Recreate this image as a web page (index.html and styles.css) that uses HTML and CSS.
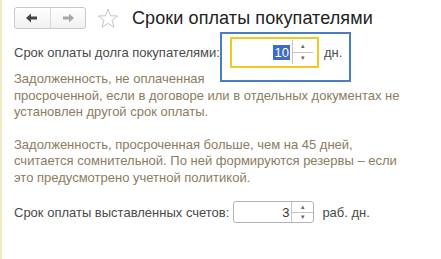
FILE: index.html
```html
<!DOCTYPE html>
<html lang="ru">
<head>
    <meta charset="UTF-8">
    <title>Сроки оплаты покупателями</title>
    <link rel="stylesheet" href="styles.css">
</head>
<body>
    <div class="form">
        <div class="header">
            <div class="nav">
                <button class="nav-btn back">
                    <svg width="12" height="10" viewBox="0 0 12 10"><path d="M0 5 L5 0.5 L5 3.5 L11 3.5 L11 6.5 L5 6.5 L5 9.5 Z" fill="#444"/></svg>
                </button>
                <button class="nav-btn fwd">
                    <svg width="12" height="10" viewBox="0 0 12 10"><path d="M12 5 L7 0.5 L7 3.5 L1 3.5 L1 6.5 L7 6.5 L7 9.5 Z" fill="#a8a8a8"/></svg>
                </button>
            </div>
            <svg class="star" width="22" height="21" viewBox="0 0 22 21">
                <path d="M11 1 L13.5 7.8 L20.6 8 L15 12.4 L17 19.4 L11 15.3 L5 19.4 L7 12.4 L1.4 8 L8.5 7.8 Z" fill="none" stroke="#c4c4c4" stroke-width="1"/>
            </svg>
            <h1 class="title">Сроки оплаты покупателями</h1>
        </div>

        <div class="row first">
            <span class="label">Срок оплаты долга покупателями:</span>
            <div class="focus-box">
                <div class="hint-frame"></div>
                <div class="num-input">
                    <span class="value"><span class="selected">10</span></span>
                    <span class="spin"><span class="up">&#9652;</span><span class="down">&#9662;</span></span>
                </div>
            </div>
            <span class="unit">дн.</span>
        </div>

        <p class="note">Задолженность, не оплаченная<br>просроченной, если в договоре или в отдельных документах не<br>установлен другой срок оплаты.</p>

        <p class="note second">Задолженность, просроченная больше, чем на 45 дней,<br>считается сомнительной. По ней формируются резервы – если<br>это предусмотрено учетной политикой.</p>

        <div class="row last">
            <span class="label">Срок оплаты выставленных счетов:</span>
            <div class="num-input small">
                <span class="value">3</span>
                <span class="spin"><span class="up">&#9652;</span><span class="down">&#9662;</span></span>
            </div>
            <span class="unit">раб. дн.</span>
        </div>
    </div>
</body>
</html>
```

FILE: styles.css
```css
body{
    margin : 0;
    background : #fff;
    font-family : "Liberation Sans", Arial, sans-serif;
}

.form{
    border-left : 2px solid #f2e9c4;
    min-height : 259px;
    box-sizing : border-box;
    padding : 7px 0 0 12px;
}

.header{
    display : flex;
    align-items : center;
    height : 22px;
}

.nav{
    display : flex;
    width : 72px;
    height : 22px;
    box-sizing : border-box;
    border : 1px solid #c9c9c9;
    border-radius : 3px;
    background : linear-gradient(#ffffff, #f1f1f1);
}

.nav-btn{
    flex : 1;
    border : 0;
    padding : 0;
    background : transparent;
    display : flex;
    align-items : center;
    justify-content : center;
}

.nav-btn.back{
    border-right : 1px solid #d6d6d6;
}

.star{
    margin-left : 11px;
    margin-top : 1px;
}

.title{
    margin : 0 0 0 13px;
    font-size : 18px;
    font-weight : 400;
    color : #222;
    letter-spacing : 0.1px;
}

.row{
    display : flex;
    align-items : center;
    font-size : 13px;
}

.row.first{
    height : 31px;
    margin-top : 8px;
}

.label{
    color : #4a4a4a;
}

/* tutorial highlight drawn over the field */
.hint-frame{
    position : absolute;
    left : -12px;
    top : -7px;
    width : 131px;
    height : 50px;
    box-sizing : border-box;
    border : 2px solid #4a7ebf;
}

.focus-box{
    position : relative;
    width : 89px;
    height : 31px;
    margin-left : 10px;
    box-sizing : border-box;
    border : 2px solid #f4c823;
    padding : 1px 4px 2px 0;
    display : flex;
}

.num-input{
    flex : 1;
    display : flex;
    align-items : stretch;
    background : #fff;
}

.value{
    flex : 1;
    display : flex;
    align-items : center;
    justify-content : flex-end;
    padding-right : 2px;
    color : #333;
}

.selected{
    background : #3d6acb;
    color : #fff;
    padding : 0 1px;
    line-height : 15px;
}

.spin{
    width : 20px;
    border-left : 1px solid #c4c4c4;
    display : flex;
    flex-direction : column;
    font-size : 7px;
    color : #666;
}

.spin span{
    flex : 1;
    display : flex;
    align-items : center;
    justify-content : center;
}

.spin .up{
    border-bottom : 1px solid #c4c4c4;
}

.row.first .unit{
    margin-left : 5px;
    color : #4a4a4a;
}

.note{
    margin : 3px 0 0;
    color : #8b7c60;
    font-size : 13px;
    line-height : 16.5px;
    width : 410px;
}

.note.second{
    margin-top : 16px;
}

.row.last{
    margin-top : 15px;
}

.num-input.small{
    flex : none;
    width : 81px;
    height : 22px;
    box-sizing : border-box;
    border : 1px solid #b3b3b3;
    border-radius : 3px;
    margin-left : 4px;
}

.num-input.small .spin{
    width : 21px;
}

.row.last .unit{
    margin-left : 8px;
    color : #4a4a4a;
}
```
